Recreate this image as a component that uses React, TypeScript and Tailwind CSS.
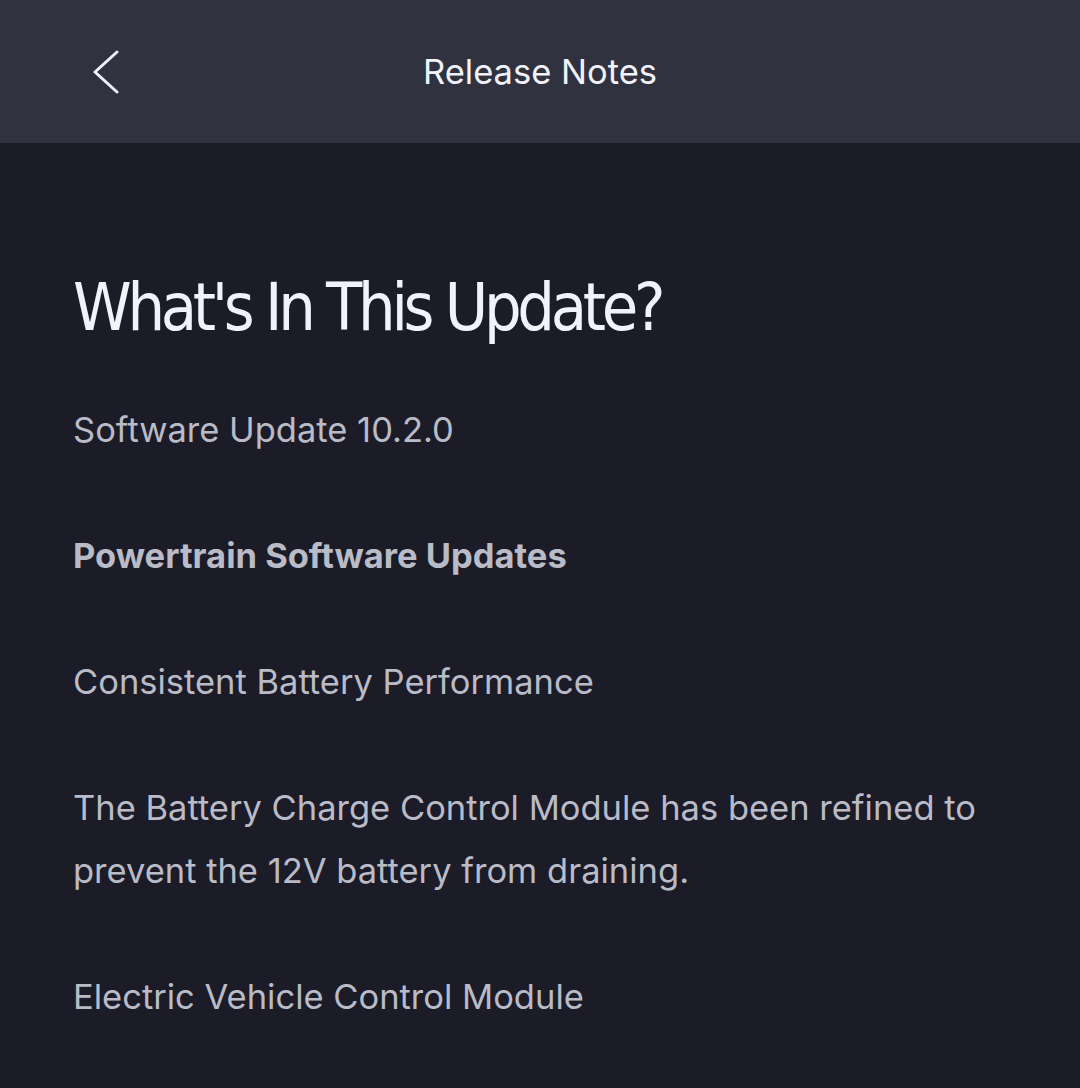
const PARAS = [
  { text: "Software Update 10.2.0", bold: false },
  { text: "Powertrain Software Updates", bold: true },
  { text: "Consistent Battery Performance", bold: false },
  {
    text: "The Battery Charge Control Module has been refined to prevent the 12V battery from draining.",
    bold: false,
  },
  { text: "Electric Vehicle Control Module", bold: false },
];

function BackIcon() {
  return (
    <svg width="26" height="44" viewBox="0 0 26 44" fill="none">
      <polyline
        points="24,2 2,22 24,42"
        stroke="#f2f3fa"
        strokeWidth="3"
        strokeLinecap="round"
        strokeLinejoin="round"
      />
    </svg>
  );
}

export default function App() {
  return (
    <div className="min-h-[1088px] w-[1080px] bg-[#1b1c27] font-['Inter',sans-serif]">
      <header className="relative flex h-[143px] items-center justify-center bg-[#30323f]">
        <button className="absolute left-[93px] top-[50px]">
          <BackIcon />
        </button>
        <h1 className="text-[34.5px] font-normal text-[#f2f3fa]">Release Notes</h1>
      </header>
      <main className="px-[73px] pt-[125px]">
        <h2 className="mb-[50px] font-['DejaVu_Sans_Condensed','DejaVu_Sans',sans-serif] text-[66px] leading-[80px] font-medium tracking-[-4.3px] text-[#f2f3fa]">
          What's In This Update?
        </h2>
        {PARAS.map((p) => (
          <p
            key={p.text}
            className={`mb-[63px] text-[34.5px] leading-[63px] text-[#b9bbc7] ${
              p.bold ? "font-bold" : "font-normal"
            }`}
          >
            {p.text}
          </p>
        ))}
      </main>
    </div>
  );
}
